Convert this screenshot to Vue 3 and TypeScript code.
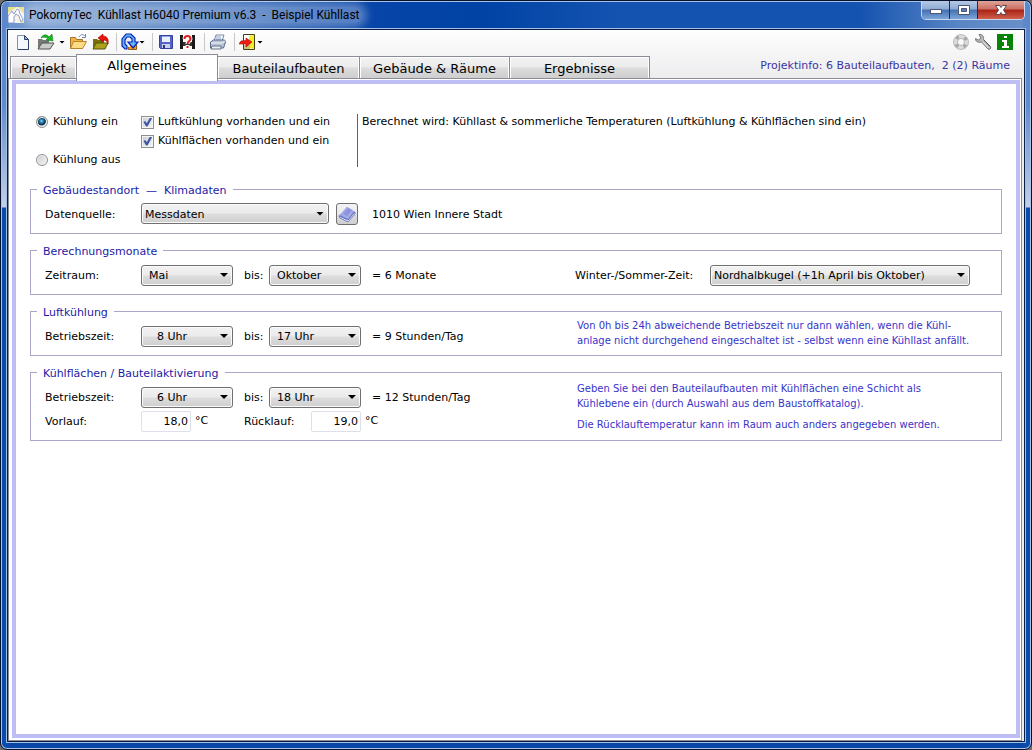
<script setup lang="ts">
import { ref } from 'vue'

const tabs = ['Projekt', 'Allgemeines', 'Bauteilaufbauten', 'Gebäude & Räume', 'Ergebnisse']
const activeTab = ref('Allgemeines')
const cooling = ref('ein')
const airCooling = ref(true)
const surfaceCooling = ref(true)
const source = ref('Messdaten')
const monthFrom = ref('Mai')
const monthTo = ref('Oktober')
const clock = ref('Nordhalbkugel (+1h April bis Oktober)')
const airFrom = ref(8)
const airTo = ref(17)
const surfFrom = ref(6)
const surfTo = ref(18)
const flow = ref('18,0')
const back = ref('19,0')
const months = ['Jänner', 'Februar', 'März', 'April', 'Mai', 'Juni', 'Juli', 'August', 'September', 'Oktober', 'November', 'Dezember']
const hours = Array.from({ length: 25 }, (_, i) => i)
</script>

<template>
  <div class="window">
    <header class="titlebar">
      <svg class="app-icon" width="16" height="16" viewBox="0 0 16 16">
        <rect width="16" height="16" fill="#f4f4ea" />
        <path d="M0 0h9L0 6zM10 0h6v7zM12 16l4-5v5z" fill="#e6df8c" />
        <path d="M0 16V9l4-5 2 3 3-5 2 1 1 4 3 5-2 3-2-6-3-2-2 3v6z" fill="#fff" stroke="#8f99d2" />
      </svg>
      <h1 class="title">PokornyTec&nbsp; Kühllast H6040 Premium v6.3&nbsp; -&nbsp; Beispiel Kühllast</h1>
      <div class="caption">
        <button class="cap min" aria-label="Minimieren">
          <svg width="14" height="12" viewBox="0 0 14 12"><rect x="1.500" y="5.500" width="11" height="4" fill="#fff" stroke="#4b5470" /></svg>
        </button>
        <button class="cap max" aria-label="Maximieren">
          <svg width="14" height="12" viewBox="0 0 14 12"><path d="M1.500 1.500h11v9h-11z" fill="#fff" stroke="#4b5470" /><path d="M4.500 4.500h5v3h-5z" fill="#5a7fbb" stroke="#4b5470" /></svg>
        </button>
        <button class="cap close" aria-label="Schließen">
          <svg width="14" height="12" viewBox="0 0 14 12"><path d="M1.500 1.500h4L7 3.500l1.500-2h4L9.500 6l3 4.500h-4L7 8.500l-1.500 2h-4l3-4.500z" fill="#fff" stroke="#5b4650" /></svg>
        </button>
      </div>
    </header>

    <main class="client">
      <div class="toolbar">
        <div class="group first">
          <button class="tool" aria-label="Neu">
            <svg width="18" height="18" viewBox="0 0 18 18"><path d="M2.500 2.500h7l4 4v10h-11z" fill="#f5f9ff" stroke="#8493ad" /><path d="M13.500 7v9.500H3" fill="none" stroke="#2e4166" /><path d="M9.500 2.500v4h4z" fill="#9db4d6" stroke="#2e4166" /></svg>
          </button>
          <button class="tool wide" aria-label="Projekt laden">
            <svg width="18" height="18" viewBox="0 0 18 18"><path d="M1 6h4l1 1h6v9H1z" fill="#777b78" /><path d="M1 16l4-6h12l-4 6z" fill="#c9ccca" stroke="#4f5350" /><path d="M4 5c2-4 6-4 8-1l3-3 1 7-7-1 2-2C8 4 6 4 4 5z" fill="#16ba1e" stroke="#0a7312" stroke-width=".5" /></svg>
          </button>
          <button class="caret" aria-label="Zuletzt verwendet"></button>
          <button class="tool" aria-label="Öffnen">
            <svg width="18" height="18" viewBox="0 0 18 18"><path d="M1.500 4.500h5l1 2h6v9h-12z" fill="#efb444" stroke="#a8762b" /><path d="M1.500 15.500l3-7h13l-4 7z" fill="#ffdc83" stroke="#b8852f" /><path d="M10 4c2-3 4-3 6-1M16.500 1v3.500H13" fill="none" stroke="#6c87b5" /></svg>
          </button>
          <button class="tool" aria-label="Speichern unter">
            <svg width="18" height="18" viewBox="0 0 18 18"><path d="M2 6h4l1 1h6v9H2z" fill="#77710a" /><path d="M2 16l3-6h12l-3 6z" fill="#aaa21d" stroke="#5b560a" /><path d="M7 5l5-4v2c4 0 6 3 5 8-1-3-2-4-5-4v2z" fill="#e9130c" stroke="#9b0906" stroke-width=".6" /></svg>
          </button>
        </div>
        <div class="group">
          <button class="tool" aria-label="Aktualisieren">
            <svg width="18" height="18" viewBox="0 0 18 18"><path d="M7.500 11.500h8v5h-8z" fill="#f59b1d" stroke="#925b14" /><path d="M3 6h6v8H3z" fill="#e9eefb" /><path d="M1 13V6l4-5h5l4 4v4h3l-5 6-5-6h4V6L9 4H6L4 7v4l2 2v3H4z" fill="#62b5f7" stroke="#0c22b4" stroke-width="1.200" /></svg>
          </button>
          <button class="caret" aria-label="Weitere Optionen"></button>
        </div>
        <div class="group">
          <button class="tool" aria-label="Speichern">
            <svg width="18" height="18" viewBox="0 0 18 18"><path d="M2.500 2.500h13v13h-12l-1-1z" fill="#5663c5" stroke="#35409c" /><path d="M5 3h8v6H5z" fill="#e9effb" /><path d="M5 3h8v1H5z" fill="#92a5e2" /><path d="M5 11h8v4H5z" fill="#cbd2e8" /><path d="M6 12h2v3H6z" fill="#29348e" /></svg>
          </button>
          <button class="tool" aria-label="Vergleichen">
            <svg width="18" height="18" viewBox="0 0 18 18"><path d="M1 2h3v14H1zM13 2h3v14h-3z" fill="#191919" /><path d="M4 9h9v4H4z" fill="#333" /><path d="M5.500 6c0-4 6-4 6 0 0 2-3 2-3 5M8.500 12v4" fill="none" stroke="#fff" stroke-width="4" /><path d="M5.500 6c0-4 6-4 6 0 0 2-3 2-3 5M8.500 13v2" fill="none" stroke="#e51c1c" stroke-width="2" /></svg>
          </button>
        </div>
        <div class="group">
          <button class="tool" aria-label="Drucken">
            <svg width="18" height="18" viewBox="0 0 18 18"><path d="M5 8l2-6h8l-2 6z" fill="#fff" stroke="#7189ae" /><path d="M7 4h5M7 6h5" stroke="#8aa0c5" /><path d="M1.500 9l3-2h11l1 2-2 6h-13z" fill="#b8c4d6" stroke="#5a6b87" /><path d="M2 10h11l3-2" fill="none" stroke="#f5f8fd" /><path d="M3 13h9v3H2z" fill="#e9eef5" stroke="#65738b" /></svg>
          </button>
        </div>
        <div class="group">
          <button class="tool" aria-label="Beenden">
            <svg width="18" height="18" viewBox="0 0 18 18"><path d="M4.500 1.500h11v15h-11z" fill="#fff" stroke="#44420c" /><path d="M10 3l5-1v14l-5-1z" fill="#f7ec28" /><path d="M5 12h6v4H5z" fill="#c9c27a" /><path d="M0 11l2-3 5-.5V5l6 4-6 5v-3z" fill="#ee1c12" stroke="#a20d08" stroke-width=".6" /></svg>
          </button>
          <button class="caret" aria-label="Beenden-Optionen"></button>
        </div>
        <div class="right-tools">
          <button class="tool" aria-label="Hilfe">
            <svg width="18" height="18" viewBox="0 0 18 18"><circle cx="9" cy="9" r="5.500" fill="none" stroke="#dcdcdc" stroke-width="4" /><circle cx="9" cy="9" r="5.500" fill="none" stroke="#a4a4a4" stroke-width="3" stroke-dasharray="3 5.640" stroke-dashoffset="-2.800" /><circle cx="9" cy="9" r="7.500" fill="none" stroke="#bdbdbd" /><circle cx="9" cy="9" r="3.500" fill="none" stroke="#b4b4b4" /></svg>
          </button>
          <button class="tool" aria-label="Einstellungen">
            <svg width="18" height="18" viewBox="0 0 18 18"><path d="M5 1.500C9 1 10 4 9.500 6.500l7 7c1 2-1 3.500-2.500 2.500l-6.500-7C4 10 1 8 1.500 5.500l3 1.500L7 5z" fill="#b9b9b9" stroke="#777" /><path d="M9 9l5.500 6" stroke="#eee" /><path d="M10 7l6 6.500" stroke="#555" /></svg>
          </button>
          <button class="tool" aria-label="Info">
            <svg width="18" height="18" viewBox="0 0 18 18"><path d="M1 1h16v16H1z" fill="#078407" /><path d="M8 3h3v2H8zM6 7h5v6h2v2H6v-2h2V9H6z" fill="#fff" /></svg>
          </button>
        </div>
      </div>

      <div class="tabbar">
        <nav class="tabs" role="tablist">
          <button
            v-for="(tab, i) in tabs"
            :key="tab"
            role="tab"
            :class="['tab', 'tab-' + i, { active: tab === activeTab }]"
            :aria-selected="tab === activeTab"
            @click="activeTab = tab"
          >{{ tab }}</button>
        </nav>
        <p class="info">Projektinfo: 6 Bauteilaufbauten,&nbsp; 2 (2) Räume</p>
      </div>

      <div class="panel-edge">
        <div class="panel">
          <section class="modes">
            <div class="radios">
              <label class="choice"><input v-model="cooling" type="radio" name="cooling" value="ein" />Kühlung ein</label>
              <label class="choice"><input v-model="cooling" type="radio" name="cooling" value="aus" />Kühlung aus</label>
            </div>
            <div class="checks">
              <label class="choice"><input v-model="airCooling" type="checkbox" />Luftkühlung vorhanden und ein</label>
              <label class="choice"><input v-model="surfaceCooling" type="checkbox" />Kühlflächen vorhanden und ein</label>
            </div>
            <p class="result">Berechnet wird: Kühllast &amp; sommerliche Temperaturen (Luftkühlung &amp; Kühlflächen sind ein)</p>
          </section>

          <fieldset>
            <legend>Gebäudestandort&nbsp; —&nbsp; Klimadaten</legend>
            <div class="row">
              <label for="source">Datenquelle:</label>
              <div class="source">
                <span class="drop long"><select id="source" v-model="source"><option>Messdaten</option><option>Normdaten</option></select></span>
                <button class="book" aria-label="Klimadaten-Katalog">
                  <svg width="18" height="18" viewBox="0 0 18 18"><path d="M1 11l8-9 8 5-7 9z" fill="#7680cf" /><path d="M2 10l7-8 7 4-6 8z" fill="#a3abe8" /><path d="M5 9l5-6 4 2-5 6z" fill="#8b94dc" /><path d="M1 11l1 2 8 4 7-8V7l-7 8z" fill="#e9ecfb" stroke="#5e67b6" stroke-width=".8" /></svg>
                </button>
              </div>
              <span class="note">1010 Wien Innere Stadt</span>
            </div>
          </fieldset>

          <fieldset>
            <legend>Berechnungsmonate</legend>
            <div class="row">
              <label for="month-from">Zeitraum:</label>
              <span class="drop inset"><select id="month-from" v-model="monthFrom"><option v-for="m in months" :key="m">{{ m }}</option></select></span>
              <label for="month-to">bis:</label>
              <span class="drop inset"><select id="month-to" v-model="monthTo"><option v-for="m in months" :key="m">{{ m }}</option></select></span>
              <span class="note">= 6 Monate</span>
              <div class="season">
                <label for="clock">Winter-/Sommer-Zeit:</label>
                <span class="drop season-drop"><select id="clock" v-model="clock"><option>Nordhalbkugel (+1h April bis Oktober)</option><option>Keine Umstellung</option></select></span>
              </div>
            </div>
          </fieldset>

          <fieldset>
            <legend>Luftkühlung</legend>
            <div class="row">
              <label for="air-from">Betriebszeit:</label>
              <span class="drop deep"><select id="air-from" v-model="airFrom"><option v-for="h in hours" :key="h" :value="h">{{ h }} Uhr</option></select></span>
              <label for="air-to">bis:</label>
              <span class="drop inset"><select id="air-to" v-model="airTo"><option v-for="h in hours" :key="h" :value="h">{{ h }} Uhr</option></select></span>
              <span class="note">= 9 Stunden/Tag</span>
              <div class="hint">
                <p>Von 0h bis 24h abweichende Betriebszeit nur dann wählen, wenn die Kühl-<br />anlage nicht durchgehend eingeschaltet ist - selbst wenn eine Kühllast anfällt.</p>
              </div>
            </div>
          </fieldset>

          <fieldset>
            <legend>Kühlflächen / Bauteilaktivierung</legend>
            <div class="row">
              <label for="surf-from">Betriebszeit:</label>
              <span class="drop deep"><select id="surf-from" v-model="surfFrom"><option v-for="h in hours" :key="h" :value="h">{{ h }} Uhr</option></select></span>
              <label for="surf-to">bis:</label>
              <span class="drop inset"><select id="surf-to" v-model="surfTo"><option v-for="h in hours" :key="h" :value="h">{{ h }} Uhr</option></select></span>
              <span class="note">= 12 Stunden/Tag</span>
              <div class="hint two">
                <p>Geben Sie bei den Bauteilaufbauten mit Kühlflächen eine Schicht als<br />Kühlebene ein (durch Auswahl aus dem Baustoffkatalog).</p>
                <p>Die Rücklauftemperatur kann im Raum auch anders angegeben werden.</p>
              </div>
              <label for="flow">Vorlauf:</label>
              <span class="temp"><input id="flow" v-model="flow" type="text" />°C</span>
              <span class="temp back"><label for="back">Rücklauf:</label><input id="back" v-model="back" type="text" />°C</span>
            </div>
          </fieldset>
        </div>
      </div>
    </main>
  </div>
</template>

<style>
html,
body {
  background: #6d6d6d;
}
body {
  margin: 0;
}
</style>

<style scoped>
* {
  box-sizing: border-box;
}
p,
h1 {
  margin: 0;
  font-weight: normal;
}
button,
select,
input {
  font: inherit;
  color: inherit;
}
button {
  padding: 0;
  border: 0;
  background: none;
}
.window {
  min-height: 100vh;
  display: flex;
  flex-direction: column;
  padding: 0 6px 7px;
  border: 1px solid #06122b;
  border-radius: 7px;
  box-shadow: inset 0 0 0 1px #a9c4e8;
  background:
    linear-gradient(#5c87c8 0, #5d8bcd 100px, #c3d0e8 205px, #0a4bae 206px) left 1px top 1px / 7px calc(100% - 2px) no-repeat,
    linear-gradient(#5c87c8 0, #5d8bcd 100px, #c3d0e8 205px, #0a4bae 206px) right 1px top 1px / 7px calc(100% - 2px) no-repeat,
    linear-gradient(90deg, #7198cf 0, #5f89c5 110px, #0845a8 360px, #0043a5 480px, #1553b0 620px, #1553b0 860px, #5a86c5 960px, #6a90c8 100%) top / 100% 30px no-repeat,
    #0846a6;
  background-clip: padding-box;
  font-family: "DejaVu Sans", Verdana, sans-serif;
  font-size: 11px;
  line-height: 14px;
  color: #000;
}
.titlebar {
  height: 28px;
  display: flex;
  align-items: center;
  padding-left: 1px;
  font-family: Roboto, "Open Sans", sans-serif;
}
.title {
  margin-left: 3px;
  font-size: 12px;
  line-height: 16px;
  padding: 0 2px;
  border-radius: 8px;
  background: rgba(255, 255, 255, 0.3);
  box-shadow: 0 0 8px 5px rgba(255, 255, 255, 0.3);
}
.caption {
  margin-left: auto;
  align-self: flex-start;
  display: flex;
  height: 19px;
  border: 1px solid #c9d7ee;
  border-top: 0;
  border-radius: 0 0 5px 5px;
  overflow: hidden;
}
.cap {
  width: 28px;
  display: grid;
  place-items: center;
  border-right: 1px solid #1c2c4e;
  background: linear-gradient(#b5c8e4 0, #8fabd4 45%, #4570b0 50%, #7ba5da 100%);
}
.cap.close {
  width: 46px;
  border: 0;
  background: linear-gradient(#dfa499 0, #cb6d60 45%, #a92116 50%, #d0604b 100%);
}
.client {
  flex: 1;
  display: flex;
  flex-direction: column;
  border: 1px solid #0a1d44;
  outline: 1px solid #a3bfe4;
  background: linear-gradient(#fefefe 0, #ececee 50px);
}
.toolbar {
  display: flex;
  align-items: center;
  height: 24px;
  padding: 0 10px 0 7px;
}
.group {
  display: flex;
  align-items: center;
  height: 18px;
  padding: 0 7px 0 4px;
  border-right: 1px solid #c8c8c8;
}
.group.first {
  padding-left: 0;
}
.group:nth-child(5) {
  border: 0;
}
.tool {
  width: 18px;
  height: 18px;
}
.tool svg {
  display: block;
}
.tool.wide {
  width: 22px;
}
.tool + .tool,
.caret + .tool {
  margin-left: 4px;
}
.caret {
  width: 6px;
  height: 18px;
}
.caret::before {
  content: "";
  display: block;
  width: 6px;
  height: 3px;
  background: #000;
  clip-path: polygon(0 0, 100% 0, 50% 100%);
}
.right-tools {
  display: flex;
  margin-left: auto;
}
.tabbar {
  height: 24px;
  display: flex;
  justify-content: space-between;
  padding: 0 14px 0 2px;
}
.tabs {
  display: flex;
  align-items: flex-end;
  font-size: 13px;
  line-height: 16px;
}
.tab {
  height: 22px;
  padding: 3px 0 0;
  border: 1px solid #8a8c98;
  border-bottom: 0;
  margin-right: -1px;
  box-shadow: inset 1px 1px 0 #fff, inset -1px 0 0 #fff;
  background: linear-gradient(#f3f3f3 0, #ebebeb 48%, #dcdcdc 52%, #cecece 100%);
}
.tab-0 {
  width: 67px;
}
.tab-1 {
  width: 142px;
}
.tab-2 {
  width: 143px;
}
.tab-3 {
  width: 151px;
}
.tab-4 {
  width: 141px;
}
.tab.active {
  z-index: 1;
  height: 27px;
  margin-bottom: -3px;
  padding: 0 0 4px;
  background: #fff;
}
.info {
  padding-top: 5px;
  color: #3a34a4;
}
.panel-edge {
  flex: 1;
  display: flex;
  margin-right: 2px;
  border: 1px solid #8a8c98;
  padding: 1px 1px 2px 3px;
  background: #fff;
}
.panel {
  flex: 1;
  min-width: 0;
  border: 4px solid #bebef5;
  padding: 30px 14px 16px;
}
.modes {
  display: flex;
  height: 53px;
  margin-bottom: 15px;
}
.radios {
  width: 105px;
  padding-left: 6px;
  display: flex;
  flex-direction: column;
  gap: 24px;
}
.checks {
  width: 223px;
  padding-left: 6px;
  display: flex;
  flex-direction: column;
  gap: 5px;
  border-right: 1px solid #606068;
}
.choice {
  display: flex;
  align-items: center;
  gap: 4px;
  height: 14px;
  margin-top: 1px;
}
.radios .choice {
  gap: 5px;
}
.choice + .choice {
  margin-top: 0;
}
.choice input {
  appearance: none;
  flex: none;
  width: 13px;
  height: 13px;
  margin: 0;
  border: 1px solid #8e8f8f;
  background: linear-gradient(135deg, #c8ccd2, #f6f6f6);
  box-shadow: inset 0 0 0 1px #f4f4f4;
}
.choice input[type="radio"] {
  width: 12px;
  height: 12px;
  border-radius: 50%;
}
.choice input[type="radio"]:checked {
  background: radial-gradient(circle at 45% 40%, #7fd6f5 0, #2274a0 2px, #0c2c48 4px, #e8eaec 5px);
}
.choice input[type="checkbox"]:checked {
  display: grid;
}
.choice input[type="checkbox"]:checked::before {
  content: "";
  width: 9px;
  height: 9px;
  margin: 1px;
  background: #3d55a2;
  clip-path: polygon(5% 50%, 25% 40%, 42% 65%, 78% 0, 100% 8%, 50% 100%, 35% 100%);
}
.result {
  padding: 1px 0 0 4px;
}
fieldset {
  min-width: 0;
  height: 52px;
  margin: 0 0 9px;
  padding: 0 6px;
  border: 1px solid #a9a7c9;
}
fieldset:last-child {
  height: 76px;
}
legend {
  padding: 0 6px;
  height: 14px;
  line-height: 18px;
  color: #1c1aa6;
}
.row {
  display: grid;
  grid-template-columns: 96px 103px 25px 103px 203px 1fr;
  grid-auto-rows: 22px;
  row-gap: 2px;
  align-items: center;
  padding: 7px 0 0 8px;
}
.row label,
.note {
  padding-top: 2px;
}
.source {
  grid-column: span 3;
  display: flex;
  gap: 7px;
}
.drop {
  display: grid;
  align-items: center;
  width: 92px;
  height: 21px;
  border: 1px solid #707070;
  border-radius: 3px;
  box-shadow: inset 0 0 0 1px #fafafa;
  background: linear-gradient(#f2f2f2 0, #ebebeb 48%, #dddddd 52%, #cfcfcf 100%);
}
.drop select {
  grid-area: 1 / 1;
  appearance: none;
  width: 100%;
  height: 19px;
  padding: 2px 14px 0 3px;
  border: 0;
  background: none;
}
.drop::after {
  content: "";
  grid-area: 1 / 1;
  justify-self: end;
  width: 8px;
  height: 4px;
  margin-right: 4px;
  background: #000;
  clip-path: polygon(0 0, 100% 0, 50% 100%);
  pointer-events: none;
}
.drop.inset select {
  padding-left: 7px;
}
.drop.deep select {
  padding-left: 15px;
}
.drop.long {
  width: 188px;
}
.book {
  display: grid;
  place-items: center;
  width: 22px;
  height: 22px;
  border: 1px solid #707070;
  border-radius: 3px;
  background: linear-gradient(#f2f2f2 0, #ebebeb 48%, #dddddd 52%, #cfcfcf 100%);
}
.season {
  display: flex;
  align-items: center;
}
.season label {
  flex: none;
  width: 135px;
}
.drop.season-drop {
  width: 260px;
}
.hint {
  padding-left: 2px;
  font-size: 10px;
  line-height: 15px;
  color: #3834c8;
  align-self: start;
  margin-top: -7px;
  white-space: nowrap;
}
.hint.two {
  grid-row: span 2;
  margin-top: -5px;
}
.hint p + p {
  margin-top: 6px;
}
.temp {
  display: flex;
  align-items: center;
  gap: 4px;
}
.temp input {
  width: 50px;
  height: 21px;
  padding: 0 2px;
  border: 1px solid #dde0ea;
  border-radius: 2px;
  background: #fff;
  text-align: right;
}
.temp.back {
  grid-column: span 3;
}
.temp.back label {
  width: 63px;
}
</style>
